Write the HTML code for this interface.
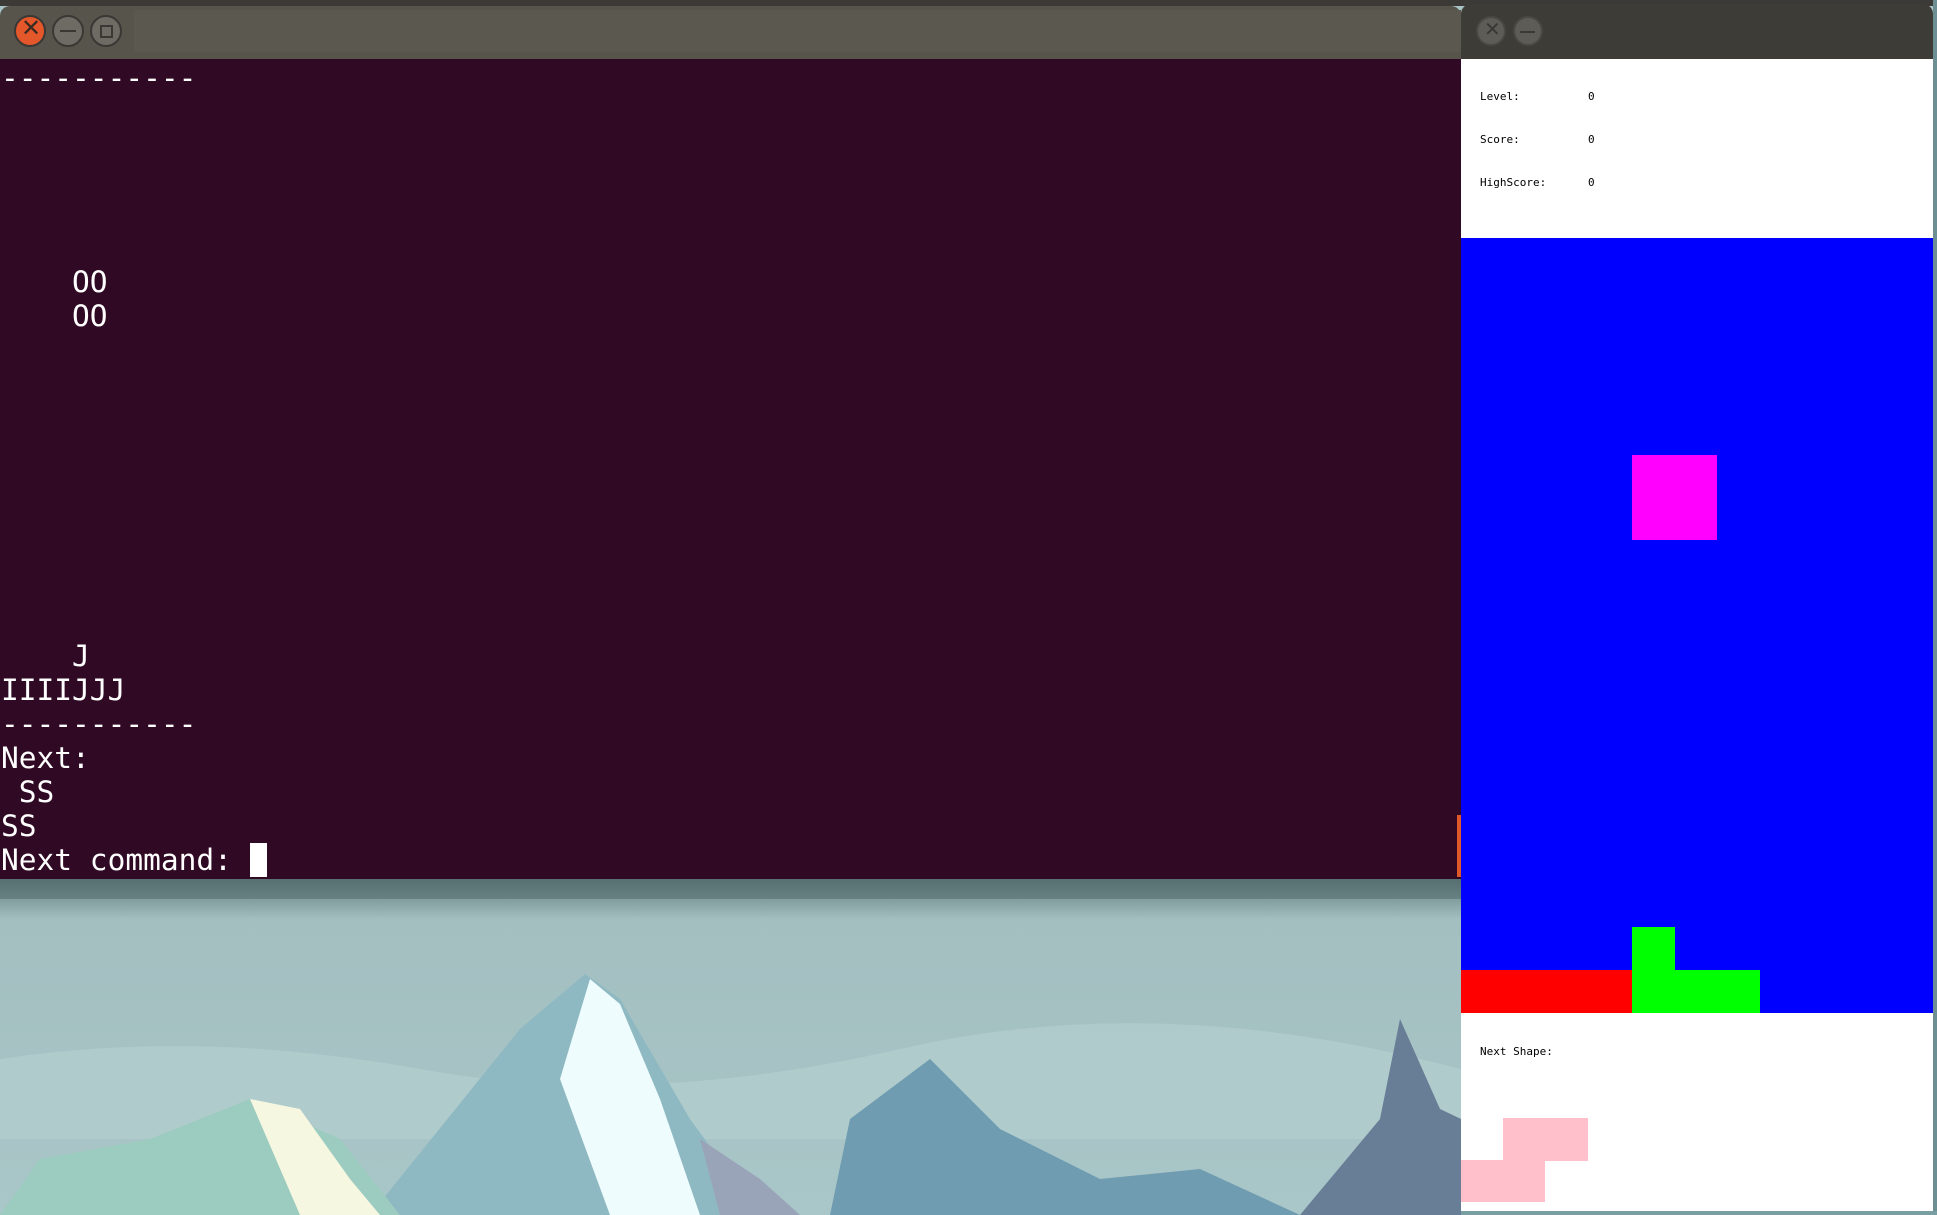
<!DOCTYPE html>
<html><head><style>
*{margin:0;padding:0;box-sizing:border-box}
body{width:1937px;height:1215px;overflow:hidden;position:relative;background:#a9c4c6;font-family:"Liberation Sans",sans-serif}
.abs{position:absolute}
#term{left:0;top:59px;width:1461px;height:820px;background:#300a24;overflow:hidden}
#term pre{position:absolute;left:1px;top:2px;font-family:"DejaVu Sans Mono","Liberation Mono",monospace;font-size:29.5px;line-height:34px;color:#fff;white-space:pre}
.btn{position:absolute;width:32px;height:32px;border-radius:50%;border:2px solid #3a3834}
.info{position:absolute;font-family:"DejaVu Sans Mono","Liberation Mono",monospace;font-size:11px;color:#000}
</style></head><body>
<div class="abs" style="left:0;top:0;width:1937px;height:6px;background:#3b3a36"></div>
<svg class="abs" style="left:0;top:879px" width="1461" height="336" viewBox="0 0 1461 336">
<defs><linearGradient id="sky" x1="0" y1="0" x2="0" y2="1"><stop offset="0" stop-color="#5f7b7c"/><stop offset="0.12" stop-color="#a3bfc0"/><stop offset="1" stop-color="#a9c6c8"/></linearGradient></defs>
<rect width="1461" height="336" fill="url(#sky)"/>
<path d="M0 180 Q200 150 420 190 T900 170 T1461 190 L1461 260 L0 260Z" fill="#b6d0d1" opacity=".6"/>
<path d="M370 336 L520 150 L585 95 L620 120 L690 240 L760 336Z" fill="#8fb9c2"/>
<path d="M560 200 L590 100 L620 125 L660 220 L700 336 L610 336Z" fill="#eefcfd"/>
<path d="M700 260 L760 300 L800 336 L720 336Z" fill="#9aa4b9"/>
<path d="M830 336 L850 240 L930 180 L1000 250 L1100 300 L1200 290 L1300 336Z" fill="#6f9cb0"/>
<path d="M1300 336 L1380 240 L1400 140 L1440 230 L1461 240 L1461 336Z" fill="#687d96"/>
<path d="M0 336 L40 280 L150 260 L250 220 L340 260 L400 336Z" fill="#9ccbc0"/>
<path d="M250 220 L300 230 L350 300 L380 336 L300 336Z" fill="#f6f7e0"/>
<rect width="1461" height="20" fill="#4e6465" opacity=".5"/>
</svg>
<div class="abs" style="left:0;top:6px;width:1461px;height:53px;background:#57544c;border-radius:10px 10px 0 0"></div>
<div class="abs" style="left:134px;top:10px;width:1327px;height:42px;background:#5b584f"></div>
<div class="btn" style="left:14px;top:15px;background:#e4572a"></div>
<div class="abs" style="left:21px;top:14px;color:#3a2a22;font-size:24px">✕</div>
<div class="btn" style="left:52px;top:15px;background:#6e6b65"></div>
<div class="abs" style="left:60px;top:30px;width:16px;height:2px;background:#3a3834"></div>
<div class="btn" style="left:90px;top:15px;background:#6e6b65"></div>
<div class="abs" style="left:100px;top:25px;width:13px;height:13px;border:2px solid #3a3834"></div>
<div id="term" class="abs"><pre>-----------





    OO
    OO









    J
IIIIJJJ
-----------
Next:
 SS
SS
Next command: <span style="background:#fff">&nbsp;</span></pre>
<div class="abs" style="left:1457px;top:756px;width:4px;height:62px;background:#e0582a"></div>
</div>
<div class="abs" style="left:1461px;top:4px;width:472px;height:55px;background:#3d3c37;border-radius:10px 10px 0 0"></div>
<div class="btn" style="left:1476px;top:16px;width:30px;height:30px;background:#5e5c57;border-color:#4a4843"></div>
<div class="abs" style="left:1484px;top:17px;color:#3a3834;font-size:20px">✕</div>
<div class="btn" style="left:1513px;top:16px;width:30px;height:30px;background:#5e5c57;border-color:#4a4843"></div>
<div class="abs" style="left:1520px;top:31px;width:15px;height:2px;background:#3a3834"></div>
<div class="abs" style="left:1461px;top:59px;width:472px;height:179px;background:#fff"></div>
<div class="info" style="left:1480px;top:90px">Level:</div>
<div class="info" style="left:1588px;top:90px">0</div>
<div class="info" style="left:1480px;top:133px">Score:</div>
<div class="info" style="left:1588px;top:133px">0</div>
<div class="info" style="left:1480px;top:176px">HighScore:</div>
<div class="info" style="left:1588px;top:176px">0</div>
<div class="abs" style="left:1461px;top:238px;width:472px;height:775px;background:#0000ff"></div>
<div class="abs" style="left:1632px;top:455px;width:85px;height:85px;background:#ff00ff"></div>
<div class="abs" style="left:1461px;top:970px;width:171px;height:43px;background:#ff0000"></div>
<div class="abs" style="left:1632px;top:927px;width:43px;height:43px;background:#00ff00"></div>
<div class="abs" style="left:1632px;top:970px;width:128px;height:43px;background:#00ff00"></div>
<div class="abs" style="left:1461px;top:1013px;width:472px;height:198px;background:#fff"></div>
<div class="info" style="left:1480px;top:1045px">Next Shape:</div>
<div class="abs" style="left:1503px;top:1118px;width:85px;height:43px;background:#ffc0cb"></div>
<div class="abs" style="left:1461px;top:1160px;width:84px;height:42px;background:#ffc0cb"></div>
<div class="abs" style="left:1933px;top:0;width:4px;height:1215px;background:#6d8f93"></div>
<div class="abs" style="left:1461px;top:1211px;width:476px;height:4px;background:#7a9fa3"></div>
</body></html>
